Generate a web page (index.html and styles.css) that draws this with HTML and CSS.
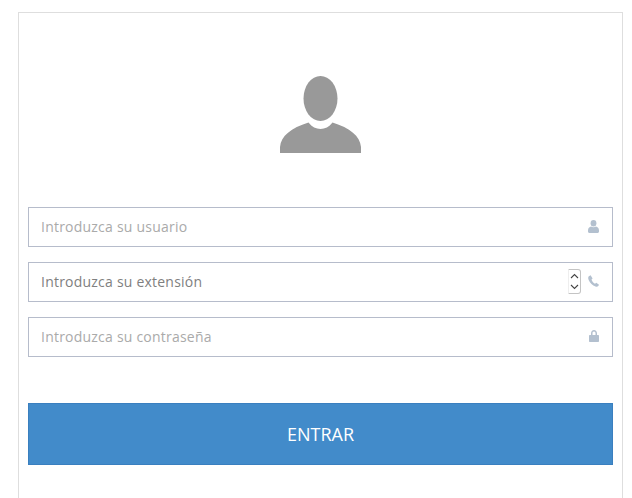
FILE: index.html
```html
<!DOCTYPE html>
<html lang="es">
<head>
<meta charset="utf-8">
<title>Acceso</title>
<link rel="stylesheet" href="styles.css">
</head>
<body>
<main class="card">
  <div class="avatar">
    <svg class="avatar-icon" width="81" height="78" viewBox="0 0 81 78" aria-hidden="true">
      <ellipse cx="40.5" cy="22.5" rx="17" ry="22.5"/>
      <path d="M0 77V71C1 60 11 52 28.500 46.500C32 51 36 53 40.500 53C45 53 49 51 52.500 46.500C70 52 80 60 81 71V77Z"/>
    </svg>
  </div>
  <form class="form">
    <div class="field">
      <input class="input" type="text" placeholder="Introduzca su usuario">
      <svg class="field-icon" width="11" height="13" viewBox="0 0 11 13" aria-hidden="true">
        <ellipse cx="5.500" cy="3.200" rx="2.900" ry="3.200"/>
        <path d="M0 10.500C0 8 1.500 6.800 3 6.500C4.500 7.500 6.500 7.500 8 6.500C9.500 6.800 11 8 11 10.500V11.500C11 12.300 10.300 13 9.500 13H1.500C.7 13 0 12.300 0 11.500Z"/>
      </svg>
    </div>
    <div class="field">
      <input class="input input-value" type="text" value="Introduzca su extensión">
      <div class="spinner" aria-hidden="true">
        <svg width="9" height="6" viewBox="0 0 9 6"><path d="M1 5L4.500 1.500L8 5"/></svg>
        <svg width="9" height="6" viewBox="0 0 9 6"><path d="M1 1L4.500 4.500L8 1"/></svg>
      </div>
      <svg class="field-icon" width="11" height="12" viewBox="0 0 11 12" aria-hidden="true">
        <path d="M2.600 .3L.8 1.200C0 2 0 3.500 .8 5.200C2 8 4.500 10.600 7.500 11.600C8.600 12 9.700 11.800 10.300 11L11 9.700L8.300 7.700L7 8.800C5.300 8 4 6.200 3.500 4.500L4.600 3.400Z"/>
      </svg>
    </div>
    <div class="field">
      <input class="input" type="password" placeholder="Introduzca su contraseña">
      <svg class="field-icon" width="10" height="12" viewBox="0 0 10 12" aria-hidden="true">
        <path fill-rule="evenodd" d="M2 5V3.300C2 1.500 3.300 0 5 0S8 1.500 8 3.300V5H9C9.600 5 10 5.400 10 6V11C10 11.600 9.600 12 9 12H1C.4 12 0 11.600 0 11V6C0 5.400 .4 5 1 5ZM3.500 5H6.500V3.300C6.500 2.300 5.900 1.500 5 1.500S3.500 2.300 3.500 3.300Z"/>
      </svg>
    </div>
    <button class="submit" type="button">ENTRAR</button>
  </form>
</main>
</body>
</html>
```
FILE: styles.css
```css
* {
  box-sizing: border-box;
}

html,
body {
  height: 100%;
}

body {
  margin: 0;
  background: #fff;
  font-family: "Open Sans", "Liberation Sans", sans-serif;
  overflow: hidden;
}

.card {
  width: 605px;
  height: 486px;
  margin: 12px 0 0 18px;
  padding: 0 9px;
  border: 1px solid #dedede;
  border-bottom: 0;
  background: #fff;
}

.avatar {
  display: flex;
  justify-content: center;
  padding-top: 63px;
}

.avatar-icon {
  display: block;
  fill: #999;
}

.form {
  display: flex;
  flex-direction: column;
  gap: 15px;
  margin-top: 53px;
}

.field {
  position: relative;
  height: 40px;
}

.input {
  display: block;
  width: 100%;
  height: 100%;
  padding: 0 12px 2px;
  border: 1px solid #b6bccb;
  border-radius: 0;
  outline: 0;
  background: #fff;
  color: #aaa;
  font: 14px "Open Sans", "Liberation Sans", sans-serif;
  letter-spacing: .22px;
}

.input::placeholder {
  color: #aaa;
  opacity: 1;
}

.input-value {
  color: #808080;
}

.field-icon {
  position: absolute;
  top: 13px;
  right: 14px;
  fill: #b3c0cf;
}

.spinner {
  position: absolute;
  top: 7px;
  right: 32px;
  display: flex;
  flex-direction: column;
  justify-content: center;
  align-items: center;
  gap: 5px;
  width: 13px;
  height: 25px;
  border: 1px solid #c4c4c4;
  border-left-color: #eee;
  border-radius: 0 3px 3px 0;
  background: #fff;
}

.spinner svg {
  display: block;
  flex: none;
  fill: none;
  stroke: #444;
  stroke-width: 1.100;
}

.submit {
  display: block;
  width: 100%;
  height: 62px;
  margin-top: 31px;
  border: 1px solid #3a7fbf;
  border-radius: 0;
  background: #428bca;
  color: #fff;
  font: 18px "Open Sans", "Liberation Sans", sans-serif;
}
```
